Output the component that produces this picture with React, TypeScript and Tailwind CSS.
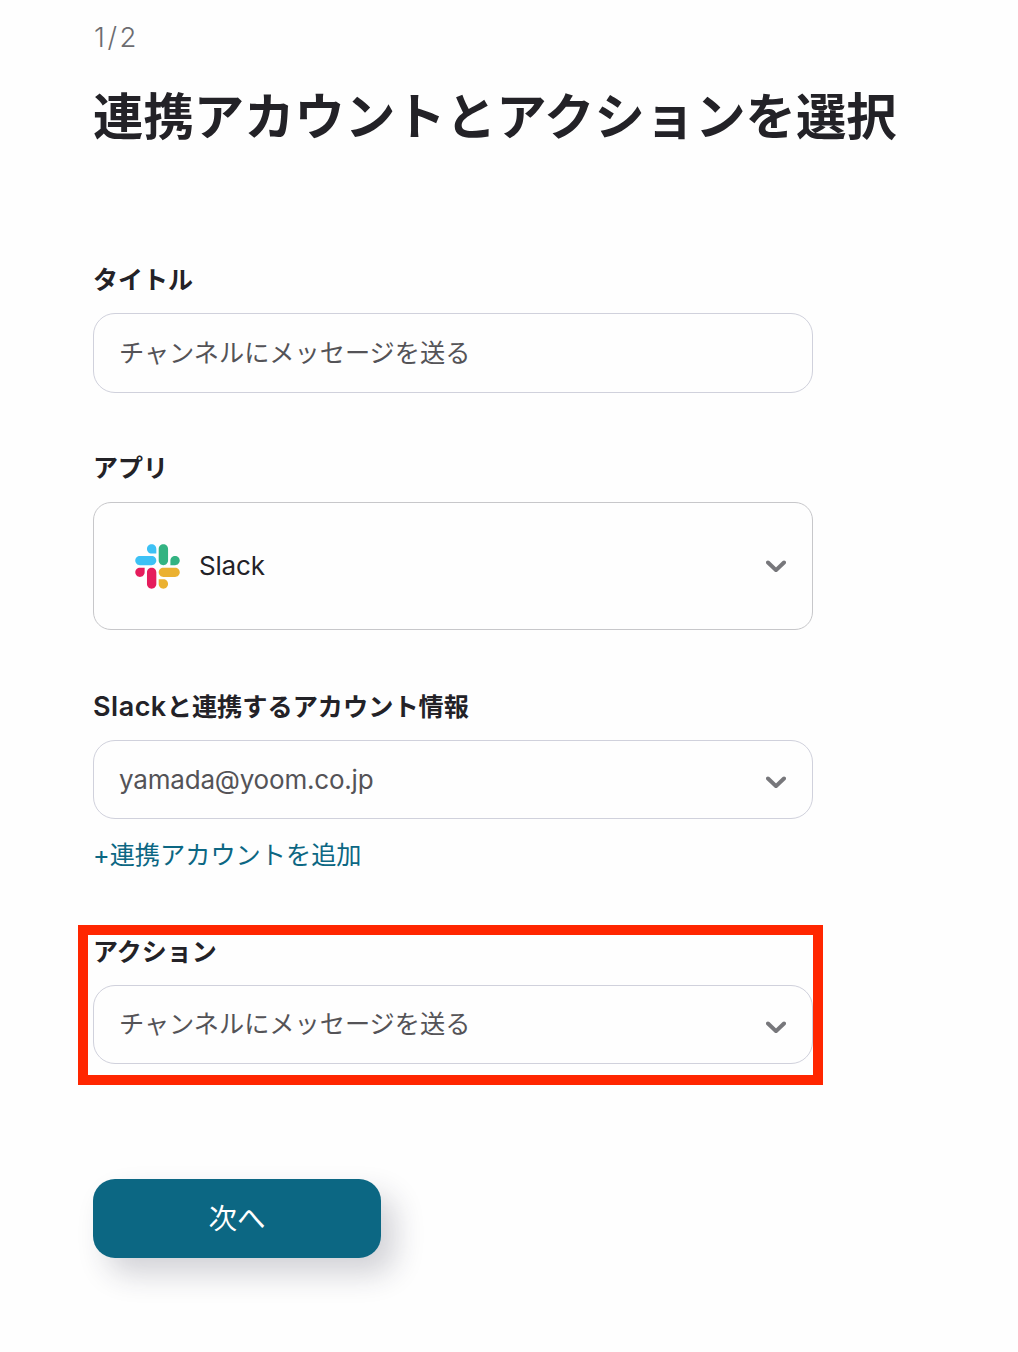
import React, { useState } from 'react';

const SlackLogo: React.FC = () => (
  <svg viewBox="0 0 127 127" className="w-[45px] h-[45px] shrink-0">
    <path fill="#e51c5c" d="M27.2 80c0 7.3-5.9 13.2-13.2 13.2C6.7 93.2.8 87.3.8 80c0-7.3 5.9-13.2 13.2-13.2h13.2V80zm6.6 0c0-7.3 5.9-13.2 13.2-13.2 7.3 0 13.2 5.9 13.2 13.2v33c0 7.3-5.9 13.2-13.2 13.2-7.3 0-13.2-5.9-13.2-13.2V80z" />
    <path fill="#3dc1f5" d="M47 27c-7.3 0-13.2-5.9-13.2-13.2C33.8 6.5 39.7.6 47 .6c7.3 0 13.2 5.9 13.2 13.2V27H47zm0 6.7c7.3 0 13.2 5.9 13.2 13.2 0 7.3-5.9 13.2-13.2 13.2H13.9C6.6 60.1.7 54.2.7 46.9c0-7.3 5.9-13.2 13.2-13.2H47z" />
    <path fill="#33b382" d="M99.9 46.9c0-7.3 5.9-13.2 13.2-13.2 7.3 0 13.2 5.9 13.2 13.2 0 7.3-5.9 13.2-13.2 13.2H99.9V46.9zm-6.6 0c0 7.3-5.9 13.2-13.2 13.2-7.3 0-13.2-5.9-13.2-13.2V13.8C66.9 6.5 72.8.6 80.1.6c7.3 0 13.2 5.9 13.2 13.2v33.1z" />
    <path fill="#ebb131" d="M80.1 99.8c7.3 0 13.2 5.9 13.2 13.2 0 7.3-5.9 13.2-13.2 13.2-7.3 0-13.2-5.9-13.2-13.2V99.8h13.2zm0-6.6c-7.3 0-13.2-5.9-13.2-13.2 0-7.3 5.9-13.2 13.2-13.2h33.1c7.3 0 13.2 5.9 13.2 13.2 0 7.3-5.9 13.2-13.2 13.2H80.1z" />
  </svg>
);

const Chevron: React.FC = () => (
  <svg viewBox="0 0 20 12" className="w-5 h-3 shrink-0" fill="none" stroke="#77777b" strokeWidth="4" strokeLinecap="round">
    <path d="M2 2.5l8 7.6 8-7.6" />
  </svg>
);

const Label: React.FC<{ children: React.ReactNode }> = ({ children }) => (
  <div className="h-8 pt-px text-[25px] leading-8 font-bold text-[#232227] whitespace-nowrap">{children}</div>
);

const App: React.FC = () => {
  const [title, setTitle] = useState('チャンネルにメッセージを送る');

  return (
    <div className="min-h-[1352px] bg-[#fefefe] pl-[93px] pt-[22px] font-['Inter','Noto_Sans_CJK_JP',sans-serif]">
      <div className="w-[720px]">
        <p className="h-8 pl-px text-[27.5px] leading-[31px] font-light tracking-[2.6px] text-[#6c6c70]">1/2</p>
        <h1 className="mt-8 h-[58px] pt-0.5 text-[50.4px] leading-[58px] font-bold text-[#232227] whitespace-nowrap">
          連携アカウントとアクションを選択
        </h1>

        <div className="mt-[119px]">
          <Label>タイトル</Label>
          <input
            type="text"
            value={title}
            onChange={(e) => setTitle(e.target.value)}
            className="mt-[18px] block w-full h-20 rounded-[22px] border border-[#d0d1dc] px-[25px] pb-1 text-[25.2px] text-[#545357] focus:outline-none"
          />
        </div>

        <div className="mt-[58px]">
          <Label>アプリ</Label>
          <button className="mt-[19px] flex w-full h-32 items-center rounded-[18px] border border-[#c7c7ca] pl-[41px] pr-[26px]">
            <SlackLogo />
            <span className="ml-[19px] flex-1 pb-0.5 text-left text-[26px] tracking-[-0.2px] text-[#232227]">Slack</span>
            <Chevron />
          </button>
        </div>

        <div className="mt-[60px]">
          <Label>
            <span className="text-[27px] font-semibold tracking-[0.5px]">Slack</span>
            <span className="text-[25.2px]">と連携するアカウント情報</span>
          </Label>
          <button className="mt-[18px] flex w-full h-[79px] items-center rounded-[22px] border border-[#d0d1dc] pl-[25px] pt-1 pr-[26px]">
            <span className="flex-1 pb-1 text-left text-[26px] tracking-[-0.2px] text-[#545357]">yamada@yoom.co.jp</span>
            <Chevron />
          </button>
          <a href="#" className="mt-5 block h-8 text-[25.2px] leading-8 text-[#0c6783]">+連携アカウントを追加</a>
        </div>

        <div className="relative mt-16">
          <Label>アクション</Label>
          <button className="mt-[18px] flex w-full h-[79px] items-center rounded-[22px] border border-[#d0d1dc] pl-[25px] pt-1 pr-[26px]">
            <span className="flex-1 pb-1 text-left text-[25.2px] text-[#545357]">チャンネルにメッセージを送る</span>
            <Chevron />
          </button>
          <div className="pointer-events-none absolute -left-[15px] -top-[10px] h-40 w-[745px] border-[10px] border-[#ff2600]" />
        </div>

        <button className="mt-[115px] block w-72 h-[79px] rounded-[22px] bg-[#0c6783] pt-0.5 text-[28.5px] text-white shadow-[14px_16px_30px_rgba(35,34,60,0.2)]">
          次へ
        </button>
      </div>
    </div>
  );
};

export default App;
